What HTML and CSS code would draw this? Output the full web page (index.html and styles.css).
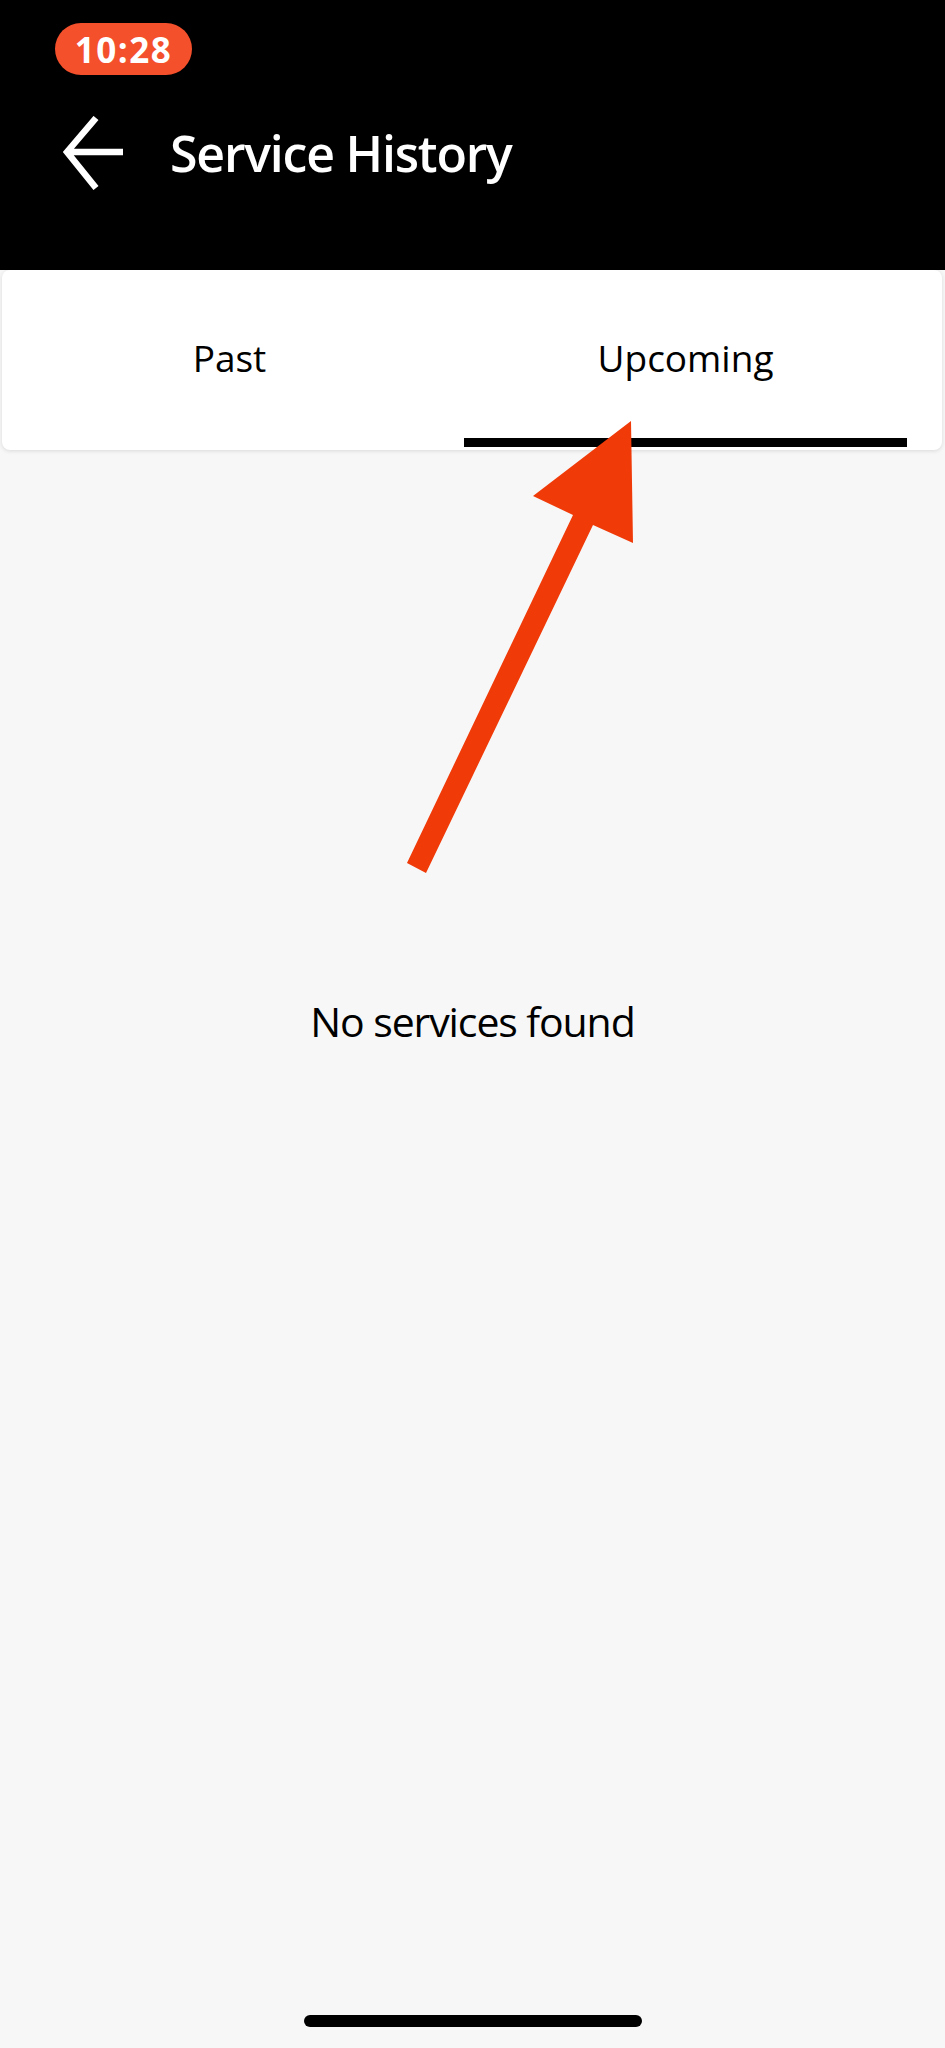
FILE: index.html
```html
<!DOCTYPE html>
<html lang="en">
<head>
<meta charset="utf-8">
<title>Service History</title>
<link rel="stylesheet" href="styles.css">
</head>
<body>
<div class="screen">
  <header class="appbar">
    <div class="status">
      <span class="time">10:28</span>
    </div>
    <div class="nav">
      <svg class="back" width="60" height="74" viewBox="0 0 60 74" aria-hidden="true">
        <path d="M60 36 H6 M33 2 L4 36 L33 72" fill="none" stroke="#fff" stroke-width="6.5" stroke-linejoin="miter"/>
      </svg>
      <h1 class="title">Service History</h1>
    </div>
  </header>
  <div class="tabcard">
    <div class="tab">Past</div>
    <div class="tab active">Upcoming</div>
  </div>
  <main class="content">
    <p class="empty">No services found</p>
  </main>
  <div class="home"></div>
  <svg class="annot" width="945" height="2048" viewBox="0 0 945 2048" aria-hidden="true">
    <polygon points="631,421 633,543 593,525 426,873 407,863 573,515 533,496" fill="#f03a08"/>
  </svg>
</div>
</body>
</html>
```
FILE: styles.css
```css
* { box-sizing: border-box; }
html, body { margin: 0; padding: 0; }
body {
  background: #f7f7f7;
  font-family: "Open Sans", "Liberation Sans", sans-serif;
  color: #000;
}
.screen {
  position: relative;
  width: 945px;
  height: 2048px;
  overflow: hidden;
  background: #f7f7f7;
}
.appbar {
  background: #000;
  height: 270px;
  padding-top: 23px;
}
.status {
  height: 52px;
  padding-left: 55px;
  display: flex;
}
.time {
  width: 137px;
  height: 52px;
  border-radius: 26px;
  background: #f4502c;
  color: #fff;
  font-family: "Open Sans", sans-serif;
  font-weight: 700;
  font-size: 35px;
  display: flex;
  align-items: center;
  justify-content: center;
  letter-spacing: 1.5px;
}
.nav {
  margin-top: 23px;
  height: 110px;
  display: flex;
  align-items: center;
  padding-left: 63px;
}
.back { flex: none; }
.title {
  margin: 0 0 0 47px;
  color: #fff;
  font-weight: 600;
  font-size: 50px;
  letter-spacing: -1.2px;
  line-height: normal;
}
.tabcard {
  margin: 0 3px 0 2px;
  height: 180px;
  background: #fff;
  border-radius: 8px;
  box-shadow: 0 1px 4px rgba(0,0,0,0.12);
  display: flex;
  gap: 13px;
  padding: 0 35px 0 6px;
  position: relative;
}
.tab {
  flex: 1;
  height: 177px;
  padding-top: 62px;
  text-align: center;
  font-size: 37px;
  line-height: normal;
  border-bottom: 9px solid transparent;
}
.tab.active { border-bottom-color: #000; }
.content {
  padding-top: 543px;
}
.empty {
  margin: 0;
  text-align: center;
  font-size: 41px;
  letter-spacing: -1.1px;
  line-height: normal;
}
.home {
  position: absolute;
  left: 304px;
  top: 2015px;
  width: 338px;
  height: 12px;
  border-radius: 6px;
  background: #000;
}
.annot {
  position: absolute;
  left: 0;
  top: 0;
  pointer-events: none;
}
```
